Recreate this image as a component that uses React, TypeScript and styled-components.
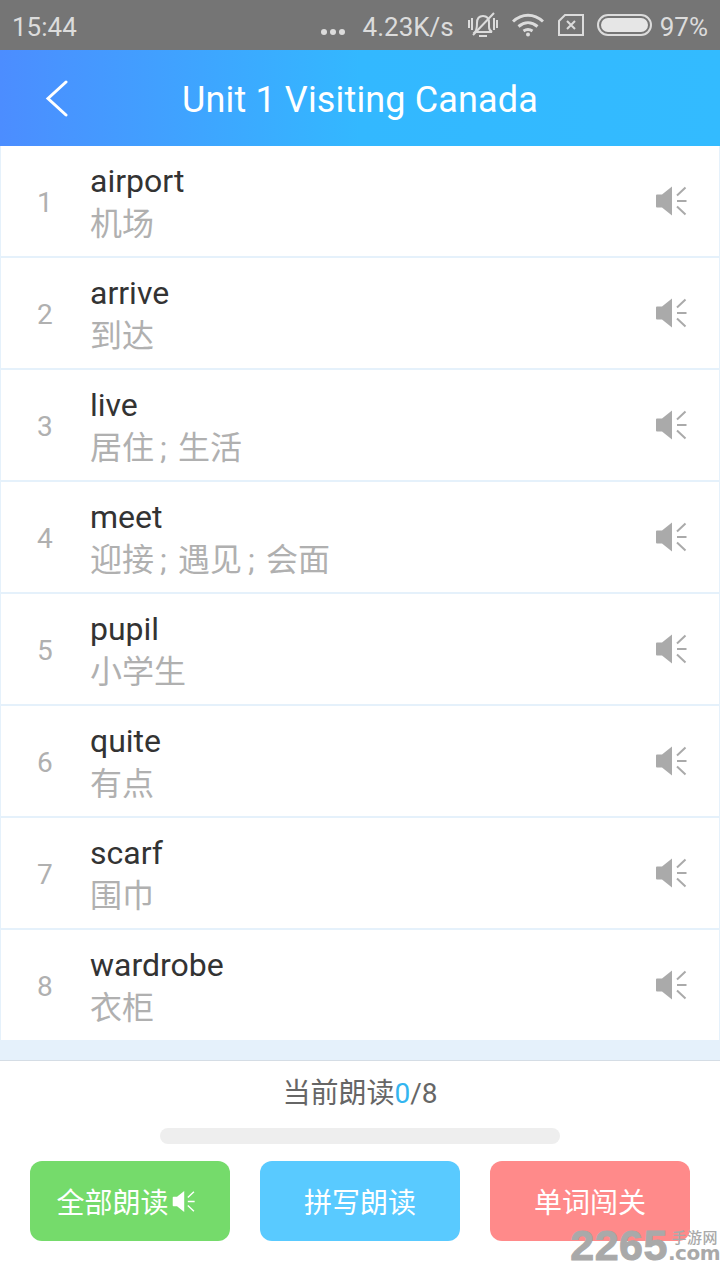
import { Fragment } from 'react';
import styled, { createGlobalStyle } from 'styled-components';

const words = [
  { word: 'airport', meaning: ['机场'] },
  { word: 'arrive', meaning: ['到达'] },
  { word: 'live', meaning: ['居住', '生活'] },
  { word: 'meet', meaning: ['迎接', '遇见', '会面'] },
  { word: 'pupil', meaning: ['小学生'] },
  { word: 'quite', meaning: ['有点'] },
  { word: 'scarf', meaning: ['围巾'] },
  { word: 'wardrobe', meaning: ['衣柜'] },
];

const GlobalStyle = createGlobalStyle`
  html, body {
    margin: 0;
    padding: 0;
    background: #fff;
    font-family: Roboto, "Noto Sans CJK SC", sans-serif;
  }
`;

const Page = styled.div`
  position: relative;
  width: 720px;
  height: 1280px;
  overflow: hidden;
  display: flex;
  flex-direction: column;
  background: #fff;
`;

const StatusBar = styled.div`
  height: 50px;
  flex: none;
  display: flex;
  align-items: center;
  padding: 4px 12px 0;
  box-sizing: border-box;
  background: #757575;
  color: #dcdcdc;
  font-size: 26px;
`;

const StatusRight = styled.div`
  margin-left: auto;
  display: flex;
  align-items: center;
`;

const Dots = styled.svg`
  width: 26px;
  height: 10px;
  margin: 10px 17px 0 0;
`;

const StatusIcon = styled.svg<{ $gap: number }>`
  display: block;
  margin-left: ${(p) => p.$gap}px;
  margin-top: -4px;
`;

const Battery = styled.span`
  margin-left: 8px;
`;

const Header = styled.header`
  height: 96px;
  flex: none;
  display: flex;
  align-items: center;
  justify-content: center;
  position: relative;
  background: linear-gradient(90deg, #4c8dff 0%, #33b8ff 50%, #33bbff 100%);
  color: #fff;
`;

const BackIcon = styled.svg`
  position: absolute;
  left: 45px;
  top: 30px;
`;

const Title = styled.h1`
  margin: 4px 0 0;
  font-size: 36px;
  font-weight: 400;
  letter-spacing: 0.15px;
`;

const List = styled.div`
  flex: none;
  height: 915px;
  box-sizing: border-box;
  padding: 0 1px 20px;
  background: #e5f1fb;
  display: flex;
  flex-direction: column;
  gap: 2px;
  border-bottom: 1px solid #d5dde5;
`;

const Row = styled.div`
  height: 110px;
  flex: none;
  display: flex;
  align-items: center;
  background: #fff;
`;

const Index = styled.div`
  width: 89px;
  padding: 2px 0 0 36px;
  box-sizing: border-box;
  flex: none;
  font-size: 28px;
  color: #b0b0b0;
`;

const WordBlock = styled.div`
  flex: 1;
  display: flex;
  flex-direction: column;
  padding-top: 6px;
`;

const Word = styled.div`
  font-size: 32px;
  line-height: 40px;
  color: #333;
`;

const Meaning = styled.div`
  font-size: 32px;
  line-height: 46px;
  color: #b0b0b0;
`;

const Separator = styled.span`
  display: inline-block;
  width: 24px;
  box-sizing: border-box;
  padding-left: 6px;
`;

const SpeakerSlot = styled.div`
  width: 64px;
  flex: none;
`;

const Footer = styled.footer`
  flex: 1;
  display: flex;
  flex-direction: column;
  align-items: center;
  background: #fff;
`;

const Progress = styled.div`
  margin-top: 15px;
  height: 36px;
  line-height: 36px;
  font-size: 28px;
  color: #666;
`;

const Current = styled.span`
  color: #33b5f0;
`;

const Track = styled.div`
  width: 400px;
  height: 16px;
  margin-top: 16px;
  border-radius: 8px;
  background: #eee;
`;

const Buttons = styled.div`
  margin-top: 17px;
  display: flex;
  gap: 30px;
`;

const ActionButton = styled.button<{ $bg: string; $shift?: number }>`
  width: 200px;
  height: 80px;
  padding: 0 ${(p) => p.$shift ?? 0}px 0 0;
  border: none;
  border-radius: 12px;
  background: ${(p) => p.$bg};
  color: #fff;
  font-family: inherit;
  font-size: 28px;
  display: flex;
  align-items: center;
  justify-content: center;
  gap: 3px;
`;

const Watermark = styled.div`
  position: absolute;
  right: 0;
  bottom: 18px;
  display: flex;
  align-items: flex-end;
  color: #a9a9a9;
  font-weight: 700;
`;

const WatermarkNumber = styled.span`
  font-family: "Liberation Sans", sans-serif;
  font-size: 43px;
  line-height: 33px;
  letter-spacing: 0.5px;
  -webkit-text-stroke: 1px #a9a9a9;
`;

const WatermarkSide = styled.div`
  display: flex;
  flex-direction: column;
  align-items: flex-end;
`;

const WatermarkCn = styled.span`
  font-family: "Noto Sans CJK SC", sans-serif;
  font-size: 15px;
  line-height: 16px;
  letter-spacing: 0.5px;
  font-weight: 500;
  margin-right: 2px;
`;

const WatermarkCom = styled.span`
  font-family: "DejaVu Sans", sans-serif;
  font-size: 20px;
  line-height: 17px;
  letter-spacing: -0.5px;
`;

const Speaker = ({ color, size }: { color: string; size: number }) => (
  <svg width={size} height={size} viewBox="0 0 32 32" fill="none" style={{ display: 'block' }}>
    <path d="M2 9.500h5L17 1.500v29L7 22.500H2q-1 0-1-1v-11q0-1 1-1z" fill={color} />
    <path d="M22 10.500 30.500 2.500M22 16h9.500M22 21.500 30.500 29.500" stroke={color} strokeWidth="2" />
  </svg>
);

export default function App() {
  return (
    <Page>
      <GlobalStyle />
      <StatusBar>
        <span>15:44</span>
        <StatusRight>
          <Dots viewBox="0 0 26 10">
            <circle cx="4" cy="5" r="3" fill="#dcdcdc" />
            <circle cx="13" cy="5" r="3" fill="#dcdcdc" />
            <circle cx="22" cy="5" r="3" fill="#dcdcdc" />
          </Dots>
          <span>4.23K/s</span>
          <StatusIcon $gap={14} width="30" height="26" viewBox="0 0 30 26" fill="none" stroke="#dcdcdc" strokeWidth="2">
            <path d="M7 20c2-2 2-4 2-9 0-4 2-7 6-7s6 3 6 7v4c0 2 1 4 3 5z" />
            <path d="M11 24h8M26 1 5 23M1 8v8M4 6v12M26 6v12M29 8v8" />
          </StatusIcon>
          <StatusIcon $gap={14} width="32" height="24" viewBox="0 0 32 24" fill="none" stroke="#dcdcdc" strokeWidth="3">
            <path d="M1 8.500c9-8.500 21-8.500 30 0M6.500 13.500c6-5 13-5 19 0M11.500 18c3-2 6-2 9 0" />
            <circle cx="16" cy="21.500" r="2" fill="#dcdcdc" stroke="none" />
          </StatusIcon>
          <StatusIcon $gap={14} width="26" height="22" viewBox="0 0 26 22" fill="none" stroke="#dcdcdc" strokeWidth="2">
            <path d="M7 1h18v20H1V7zM9 7l8 8M17 7l-8 8" />
          </StatusIcon>
          <StatusIcon $gap={13} width="55" height="22" viewBox="0 0 55 22" fill="none">
            <rect x="1" y="1" width="53" height="20" rx="10" stroke="#dcdcdc" strokeWidth="2" />
            <rect x="4" y="4" width="47" height="14" rx="7" fill="#e6e6e6" />
          </StatusIcon>
          <Battery>97%</Battery>
        </StatusRight>
      </StatusBar>
      <Header>
        <BackIcon width="24" height="38" viewBox="0 0 24 38" fill="none" stroke="#fff" strokeWidth="3" strokeLinecap="round">
          <path d="M21 2 3 18.500 21 35" />
        </BackIcon>
        <Title>Unit 1 Visiting Canada</Title>
      </Header>
      <List>
        {words.map((item, i) => (
          <Row key={item.word}>
            <Index>{i + 1}</Index>
            <WordBlock>
              <Word>{item.word}</Word>
              <Meaning>
                {item.meaning.map((part, j) => (
                  <Fragment key={part}>
                    {j > 0 && <Separator>;</Separator>}
                    {part}
                  </Fragment>
                ))}
              </Meaning>
            </WordBlock>
            <SpeakerSlot>
              <Speaker color="#aaa" size={32} />
            </SpeakerSlot>
          </Row>
        ))}
      </List>
      <Footer>
        <Progress>
          当前朗读<Current>0</Current>/8
        </Progress>
        <Track />
        <Buttons>
          <ActionButton $bg="#75db6b" $shift={9}>
            全部朗读
            <Speaker color="#fff" size={23} />
          </ActionButton>
          <ActionButton $bg="#59caff">拼写朗读</ActionButton>
          <ActionButton $bg="#ff8a8a">单词闯关</ActionButton>
        </Buttons>
      </Footer>
      <Watermark>
        <WatermarkNumber>2265</WatermarkNumber>
        <WatermarkSide>
          <WatermarkCn>手游网</WatermarkCn>
          <WatermarkCom>.com</WatermarkCom>
        </WatermarkSide>
      </Watermark>
    </Page>
  );
}
